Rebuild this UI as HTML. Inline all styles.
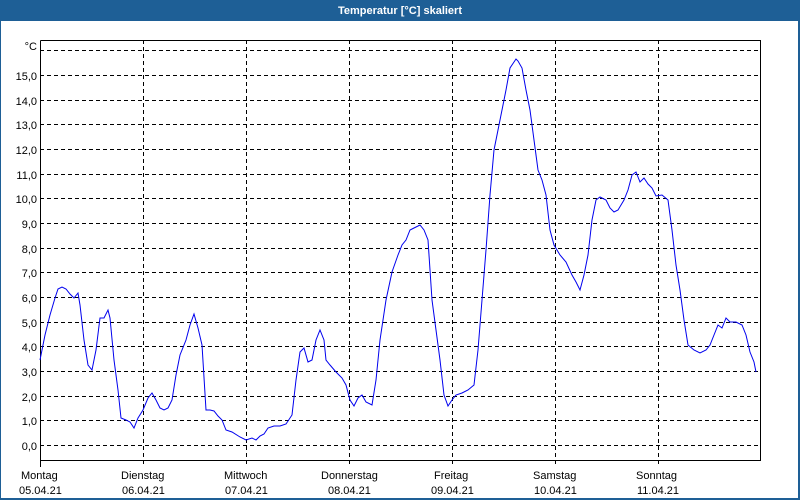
<!DOCTYPE html>
<html><head><meta charset="utf-8"><style>
body{margin:0;width:800px;height:500px;overflow:hidden;background:#fff;font-family:"Liberation Sans",sans-serif}
</style></head><body>
<svg width="800" height="500" xmlns="http://www.w3.org/2000/svg" style="display:block">
<rect x="0" y="0" width="800" height="500" fill="#1e5f96"/>
<rect x="1" y="21" width="797" height="477" fill="#fff"/>
<text x="400" y="14" fill="#fff" font-size="11" font-weight="bold" text-anchor="middle" font-family="Liberation Sans, sans-serif">Temperatur [°C] skaliert</text>
<g stroke="#000" stroke-dasharray="4,3" stroke-width="1">
<line x1="40" x2="761" y1="50.5" y2="50.5"/>
<line x1="40" x2="761" y1="75.5" y2="75.5"/>
<line x1="40" x2="761" y1="100.5" y2="100.5"/>
<line x1="40" x2="761" y1="124.5" y2="124.5"/>
<line x1="40" x2="761" y1="149.5" y2="149.5"/>
<line x1="40" x2="761" y1="174.5" y2="174.5"/>
<line x1="40" x2="761" y1="198.5" y2="198.5"/>
<line x1="40" x2="761" y1="223.5" y2="223.5"/>
<line x1="40" x2="761" y1="248.5" y2="248.5"/>
<line x1="40" x2="761" y1="272.5" y2="272.5"/>
<line x1="40" x2="761" y1="297.5" y2="297.5"/>
<line x1="40" x2="761" y1="322.5" y2="322.5"/>
<line x1="40" x2="761" y1="346.5" y2="346.5"/>
<line x1="40" x2="761" y1="371.5" y2="371.5"/>
<line x1="40" x2="761" y1="396.5" y2="396.5"/>
<line x1="40" x2="761" y1="420.5" y2="420.5"/>
<line x1="40" x2="761" y1="445.5" y2="445.5"/>
<line x1="143.5" x2="143.5" y1="40" y2="467"/>
<line x1="246.5" x2="246.5" y1="40" y2="467"/>
<line x1="349.5" x2="349.5" y1="40" y2="467"/>
<line x1="452.5" x2="452.5" y1="40" y2="467"/>
<line x1="555.5" x2="555.5" y1="40" y2="467"/>
<line x1="658.5" x2="658.5" y1="40" y2="467"/>
</g>
<path d="M40.5 40.5V460.5H760.5V40.5H40.5M40.5 460.5V467" fill="none" stroke="#000" stroke-width="1"/>
<g font-size="11" fill="#000" text-anchor="end" font-family="Liberation Sans, sans-serif">
<text x="37" y="50">°C</text>
<text x="37" y="80">15,0</text><text x="37" y="105">14,0</text><text x="37" y="129">13,0</text>
<text x="37" y="154">12,0</text><text x="37" y="179">11,0</text><text x="37" y="203">10,0</text>
<text x="37" y="228">9,0</text><text x="37" y="253">8,0</text><text x="37" y="277">7,0</text>
<text x="37" y="302">6,0</text><text x="37" y="327">5,0</text><text x="37" y="351">4,0</text>
<text x="37" y="376">3,0</text><text x="37" y="401">2,0</text><text x="37" y="425">1,0</text>
<text x="37" y="450">0,0</text>
</g>
<g font-size="11" fill="#000" font-family="Liberation Sans, sans-serif">
<text x="21" y="479">Montag</text><text x="19" y="494">05.04.21</text>
<text x="121" y="479">Dienstag</text><text x="122" y="494">06.04.21</text>
<text x="224" y="479">Mittwoch</text><text x="225" y="494">07.04.21</text>
<text x="321" y="479">Donnerstag</text><text x="328" y="494">08.04.21</text>
<text x="434" y="479">Freitag</text><text x="431" y="494">09.04.21</text>
<text x="533" y="479">Samstag</text><text x="534" y="494">10.04.21</text>
<text x="636" y="479">Sonntag</text><text x="637" y="494">11.04.21</text>
</g>
<polyline fill="none" stroke="#0000ee" stroke-width="1" points="40,360 45,335 50,315 55,298 58,289 62,287 66,289 70,294 74,298 78,293 80,305 84,340 88,365 92,370 96,350 100,318 104,318 108,310 110,318 114,360 118,390 121,418 126,420 130,422 134,428 138,418 143,410 148,398 152,393 156,400 160,408 164,410 168,408 172,400 176,375 180,355 186,340 190,325 194,314 198,328 202,345 206,410 210,410 214,411 218,416 222,420 226,430 232,432 240,437 246,440 252,438 256,440 260,436 264,434 268,428 274,426 280,426 286,424 292,415 296,380 300,352 304,348 308,362 312,360 316,340 320,330 324,340 326,360 330,365 336,372 342,378 346,385 350,400 354,406 358,398 362,395 366,402 372,405 376,380 380,340 386,300 392,272 398,255 402,245 406,240 410,230 414,228 420,225 424,230 428,240 432,300 436,330 440,360 444,395 448,406 452,400 456,395 462,393 468,390 474,385 478,350 482,300 486,250 490,195 494,150 498,130 502,110 506,90 510,68 514,62 516,59 518,61 522,68 526,90 530,110 534,140 538,170 542,180 546,195 550,230 554,245 560,255 566,262 572,275 576,282 580,290 584,275 588,255 592,220 596,200 600,197 606,200 610,208 614,212 618,210 624,200 628,190 632,175 636,172 640,182 644,178 648,184 652,188 656,196 662,195 668,200 672,230 676,265 680,290 684,320 688,345 694,350 700,353 706,350 710,345 714,335 718,325 722,328 726,318 730,322 736,322 742,325 746,335 750,352 754,362 756,372"/>
</svg>
</body></html>
